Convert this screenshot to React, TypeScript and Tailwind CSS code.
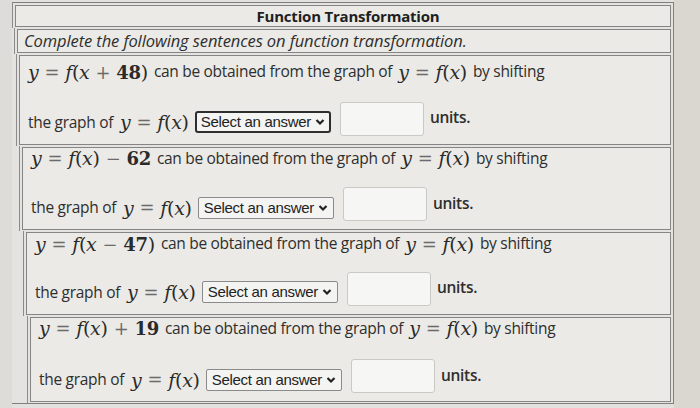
import React from "react";

const V = ({ children }: { children: React.ReactNode }) => (
  <span className="font-['DejaVu_Serif',serif] text-[19px] italic text-[#2a2a2a]">
    {children}
  </span>
);

const Op = ({ children }: { children: React.ReactNode }) => (
  <span className="mx-[6px] font-['DejaVu_Serif',serif] text-[18px] text-[#6b6b6b]">
    {children}
  </span>
);

const N = ({ children }: { children: React.ReactNode }) => (
  <span className="font-['DejaVu_Serif',serif] text-[18px] font-bold text-[#2a2a2a]">
    {children}
  </span>
);

const P = ({ children }: { children: React.ReactNode }) => (
  <span className="font-['DejaVu_Serif',serif] text-[19px] text-[#2a2a2a]">{children}</span>
);

const Fx = () => (
  <>
    <V>f</V>
    <P>(</P>
    <V>x</V>
    <P>)</P>
  </>
);

const YeqFx = () => (
  <>
    <V>y</V>
    <Op>=</Op>
    <Fx />
  </>
);

interface Row {
  lhs: React.ReactNode;
  ml: string;
  pt: string;
  gap: string;
  focused?: boolean;
}

const rows: Row[] = [
  {
    lhs: (
      <>
        <V>y</V>
        <Op>=</Op>
        <V>f</V>
        <P>(</P>
        <V>x</V>
        <Op>+</Op>
        <N>48</N>
        <P>)</P>
      </>
    ),
    ml: "ml-[4px]",
    pt: "pt-[5px]",
    gap: "mt-[18px]",
    focused: true,
  },
  {
    lhs: (
      <>
        <YeqFx />
        <Op>−</Op>
        <N>62</N>
      </>
    ),
    ml: "ml-[7px]",
    pt: "pt-[0px]",
    gap: "mt-[17px]",
  },
  {
    lhs: (
      <>
        <V>y</V>
        <Op>=</Op>
        <V>f</V>
        <P>(</P>
        <V>x</V>
        <Op>−</Op>
        <N>47</N>
        <P>)</P>
      </>
    ),
    ml: "ml-[11px]",
    pt: "pt-[0px]",
    gap: "mt-[16px]",
  },
  {
    lhs: (
      <>
        <YeqFx />
        <Op>+</Op>
        <N>19</N>
      </>
    ),
    ml: "ml-[15px]",
    pt: "pt-[0px]",
    gap: "mt-[19px]",
  },
];

const Chevron = () => (
  <svg width="10" height="8" viewBox="0 0 10 8" className="ml-[4px]">
    <path d="M1.5 2 L5 5.5 L8.5 2" fill="none" stroke="#222" strokeWidth="2.2" />
  </svg>
);

const SelectBox = ({ focused }: { focused?: boolean }) => (
  <span
    className={
      focused
        ? "ml-[6px] inline-flex h-[22px] items-center rounded-[3px] border-2 border-[#2e2e2e] bg-[#f4f4f2] px-[4px] font-['Liberation_Sans',sans-serif] text-[15px] text-[#222]"
        : "ml-[6px] inline-flex h-[22px] items-center rounded-[2px] border border-[#8a8a8a] bg-[#f4f4f2] px-[5px] font-['Liberation_Sans',sans-serif] text-[15px] text-[#222]"
    }
  >
    <span className="tracking-[-0.3px]">Select an answer</span>
    <Chevron />
  </span>
);

const RowCell = ({ row }: { row: Row }) => (
  <div className={`${row.ml} border-l border-[#8b8b8b] py-[1px] pl-[2px]`}>
    <div
      className={`border border-[#858585] bg-[#ebeae6] px-[8px] pb-[7px] ${row.pt} font-['Open_Sans',sans-serif] text-[15.5px] tracking-[-0.3px] text-[#2e2e2e]`}
    >
      <div className="flex h-[22px] items-center whitespace-nowrap">
        {row.lhs}
        <span className="ml-[6px]">can be obtained from the graph of</span>
        <span className="ml-[6px]" />
        <YeqFx />
        <span className="ml-[6px]">by shifting</span>
      </div>
      <div className={`${row.gap} flex items-center whitespace-nowrap`}>
        <div className="flex items-center pt-[7px]">
          <span className="mr-[7px]">the graph of</span>
          <YeqFx />
          <SelectBox focused={row.focused} />
        </div>
        <span className="ml-[9px] inline-block h-[34px] w-[84px] rounded-[3px] border border-[#c9c9c6] bg-[#f6f6f4]" />
        <span className="ml-[6px] -mt-[2px] font-semibold">units.</span>
      </div>
    </div>
  </div>
);

export default function App() {
  return (
    <div className="h-[408px] w-[700px] overflow-hidden bg-[#e2e1dd]">
      <div className="flex h-full">
        <div className="w-[12px] shrink-0 bg-[#dddcd8]" />
        <div className="w-[662px] shrink-0 pt-[2px]">
          <div className="border-r border-t border-b border-[#7f7f7f] bg-[#e4e3df] pr-[2px]">
            <div className="ml-[0px] border-l border-[#8b8b8b] pb-[1px] pl-[2px] pt-[2px]">
              <div className="flex h-[22px] items-center justify-center border border-[#858585] bg-[#ebeae6] pl-[10px] font-['Open_Sans',sans-serif] text-[15px] font-bold tracking-[-0.2px] text-[#1f1f1f]">
                Function Transformation
              </div>
            </div>
            <div className="ml-[2px] border-l border-[#8b8b8b] py-[1px] pl-[2px]">
              <div className="flex h-[24px] items-center border border-[#858585] bg-[#ebeae6] px-[6px] font-['Open_Sans',sans-serif] text-[16.5px] italic tracking-[-0.1px] text-[#2e2e2e]">
                Complete the following sentences on function transformation.
              </div>
            </div>
            {rows.map((row, i) => (
              <RowCell key={i} row={row} />
            ))}
          </div>
        </div>
        <div className="flex-1 bg-[#dad7d0]" />
      </div>
    </div>
  );
}
